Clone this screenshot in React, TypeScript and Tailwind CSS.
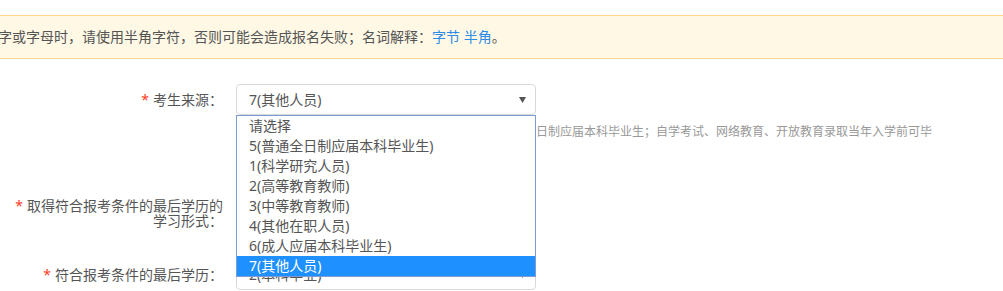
import React from "react";

const options = [
  "请选择",
  "5(普通全日制应届本科毕业生)",
  "1(科学研究人员)",
  "2(高等教育教师)",
  "3(中等教育教师)",
  "4(其他在职人员)",
  "6(成人应届本科毕业生)",
  "7(其他人员)",
];

function Arrow() {
  return (
    <svg width="7" height="6" viewBox="0 0 7 6" className="absolute right-[9px] top-1/2 -translate-y-1/2">
      <polygon points="0,0 7,0 3.5,6" fill="#555" />
    </svg>
  );
}

function Select({ value, children }: { value: string; children?: React.ReactNode }) {
  return (
    <div className="relative w-[300px] h-[31px] rounded-[4px] border border-[#d9d9d9] bg-white">
      <div className="pl-[12px] h-full flex items-center text-[14px] leading-[20px] text-[#555]">{value}</div>
      <Arrow />
      {children}
    </div>
  );
}

function Label({ children }: { children: React.ReactNode }) {
  return (
    <div className="w-[223px] shrink-0 text-right text-[14px] leading-[15px] text-[#555]">{children}</div>
  );
}

function Star() {
  return <span className="text-[#ff3d1f] mr-[4px]">*</span>;
}

export default function App() {
  return (
    <div
      className="w-full h-[291px] overflow-hidden bg-white relative"
      style={{ fontFamily: "'Noto Sans', 'Noto Sans CJK SC', sans-serif" }}
    >
      <div className="pt-[15px]">
        <div className="h-[44px] border-y border-[#fdd88a] bg-[#fef8e5] flex items-center overflow-hidden">
          <div className="ml-[-2px] whitespace-nowrap text-[14px] leading-[20px] text-[#555]">
            字或字母时，请使用半角字符，否则可能会造成报名失败；名词解释：
            <span className="text-[#2d8ce8]">字节</span>
            <span className="text-[#2d8ce8]"> 半角</span>。
          </div>
        </div>
      </div>

      <div className="mt-[25px]">
        <div className="flex items-center">
          <Label>
            <Star />考生来源：
          </Label>
          <div className="ml-[13px]">
            <Select value="7(其他人员)">
              <div className="absolute left-[-1px] top-[30px] w-[300px] border border-[#7b9bd1] bg-white z-10">
                {options.map((o) => (
                  <div
                    key={o}
                    className={
                      o === "7(其他人员)"
                        ? "h-[20px] pl-[12px] flex items-center text-[14px] leading-[20px] bg-[#1e90ff] text-white"
                        : "h-[20px] pl-[12px] flex items-center text-[14px] leading-[20px] text-[#555]"
                    }
                  >
                    {o}
                  </div>
                ))}
              </div>
            </Select>
          </div>
        </div>
        <div className="ml-[236px] mt-[8px] whitespace-nowrap text-[12px] leading-[18px] text-[#999]">
          应届本科毕业生是指：在报考当年九月一日前取得普通全日制应届本科毕业生；自学考试、网络教育、开放教育录取当年入学前可毕
        </div>

        <div className="flex items-center mt-[56px]">
          <Label>
            <Star />取得符合报考条件的最后学历的
            <br />
            学习形式：
          </Label>
          <div className="ml-[13px]">
            <Select value="请选择" />
          </div>
        </div>

        <div className="flex items-center mt-[31px]">
          <Label>
            <Star />符合报考条件的最后学历：
          </Label>
          <div className="ml-[13px]">
            <Select value="2(本科毕业)" />
          </div>
        </div>
      </div>
    </div>
  );
}
